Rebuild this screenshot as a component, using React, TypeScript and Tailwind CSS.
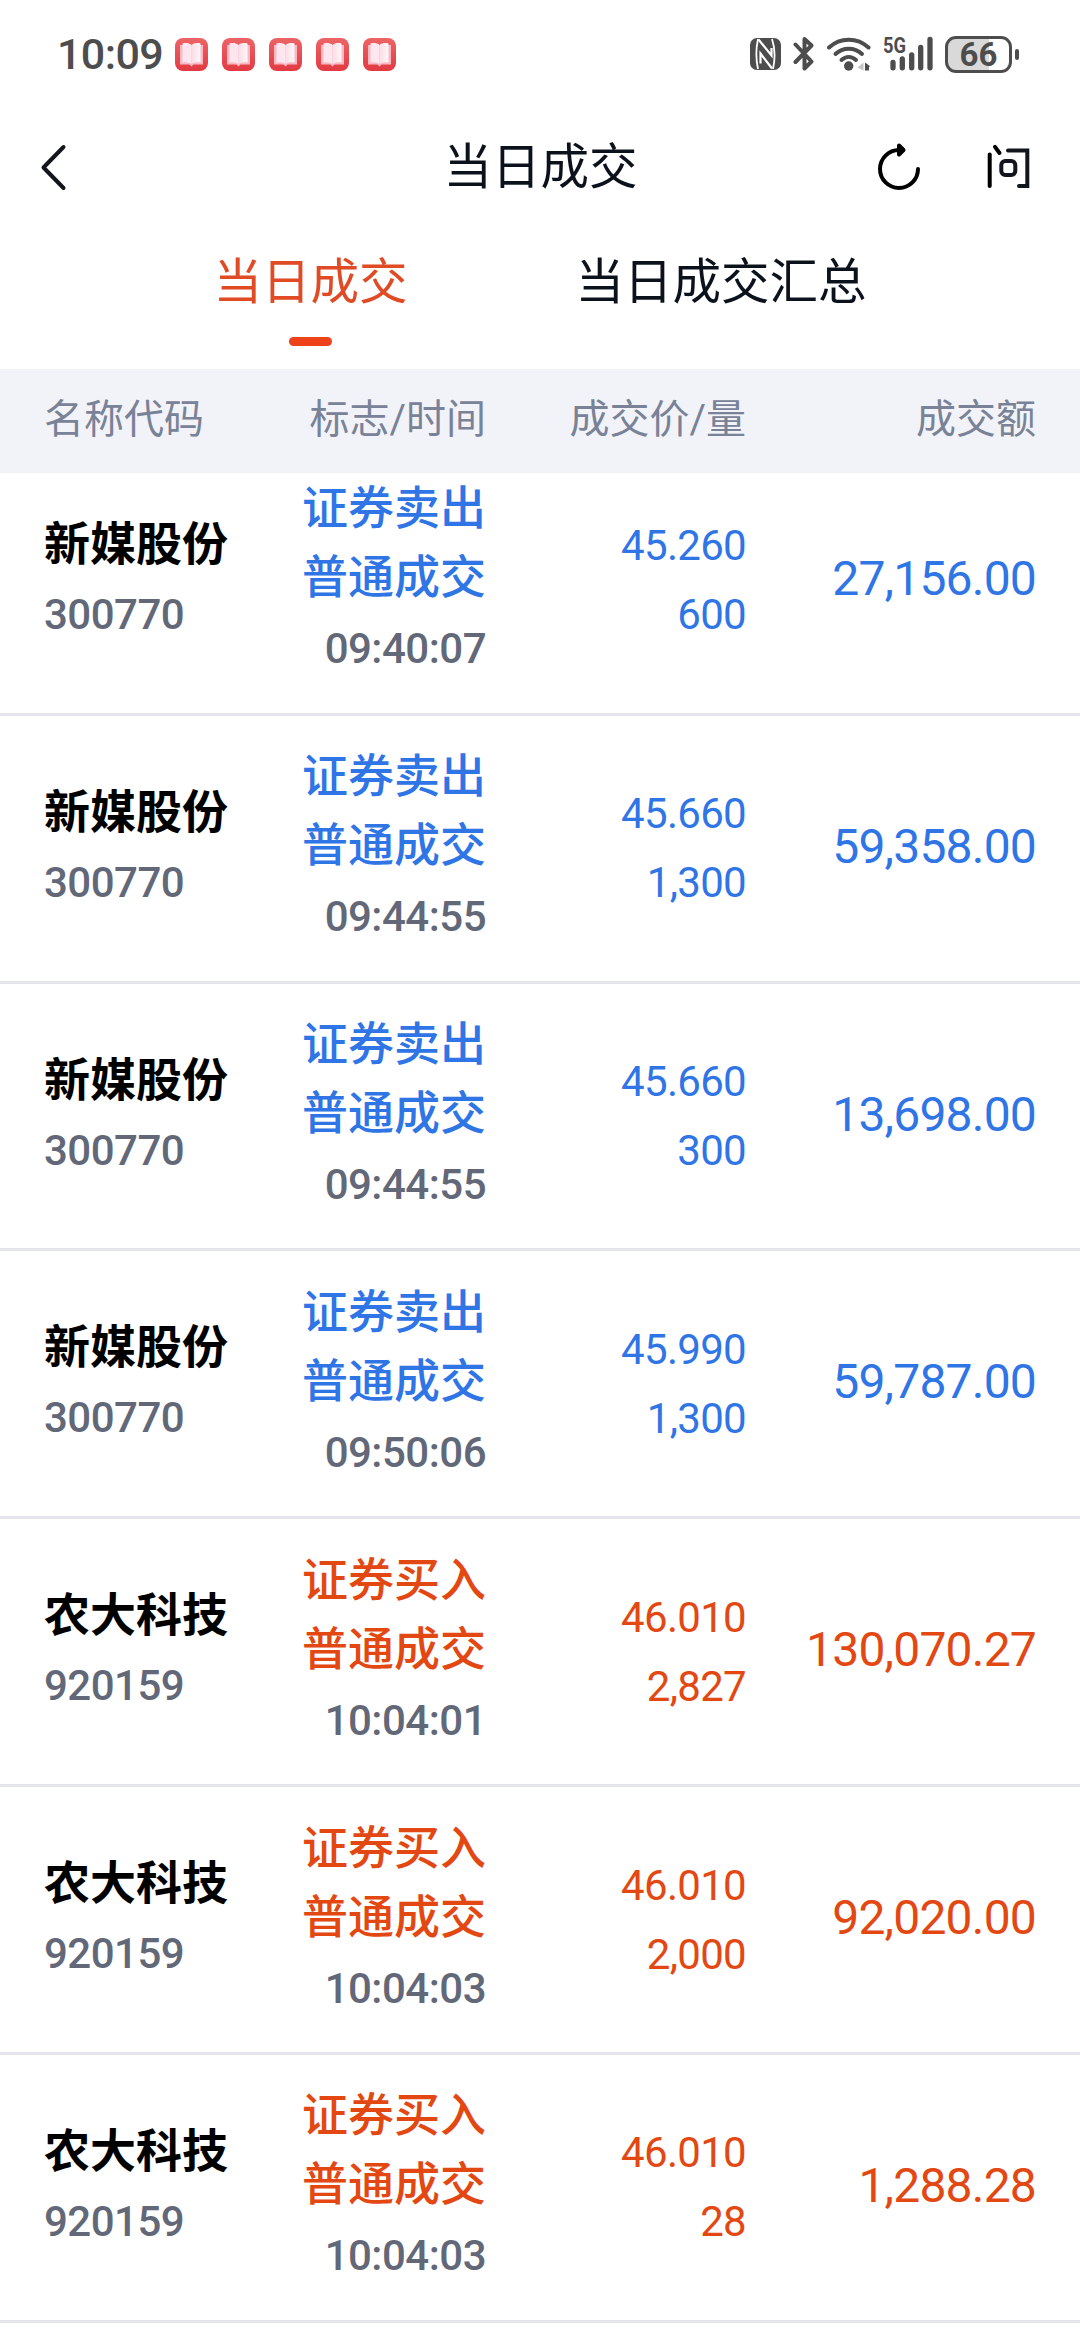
import clsx from "clsx";

type Deal = {
  name: string;
  code: string;
  side: "buy" | "sell";
  time: string;
  price: string;
  volume: string;
  amount: string;
};

const deals: Deal[] = [
  { name: "新媒股份", code: "300770", side: "sell", time: "09:40:07", price: "45.260", volume: "600", amount: "27,156.00" },
  { name: "新媒股份", code: "300770", side: "sell", time: "09:44:55", price: "45.660", volume: "1,300", amount: "59,358.00" },
  { name: "新媒股份", code: "300770", side: "sell", time: "09:44:55", price: "45.660", volume: "300", amount: "13,698.00" },
  { name: "新媒股份", code: "300770", side: "sell", time: "09:50:06", price: "45.990", volume: "1,300", amount: "59,787.00" },
  { name: "农大科技", code: "920159", side: "buy", time: "10:04:01", price: "46.010", volume: "2,827", amount: "130,070.27" },
  { name: "农大科技", code: "920159", side: "buy", time: "10:04:03", price: "46.010", volume: "2,000", amount: "92,020.00" },
  { name: "农大科技", code: "920159", side: "buy", time: "10:04:03", price: "46.010", volume: "28", amount: "1,288.28" },
];

const BookIcon = () => (
  <svg width="33" height="33" viewBox="0 0 33 33">
    <defs>
      <linearGradient id="book-bg" x1="0" y1="0" x2="0" y2="1">
        <stop offset="0" stopColor="#ec6466" />
        <stop offset="1" stopColor="#e23a42" />
      </linearGradient>
      <linearGradient id="book-page" x1="0" y1="0" x2="1" y2="0">
        <stop offset="0" stopColor="#fbdbe4" />
        <stop offset="1" stopColor="#fff7f9" />
      </linearGradient>
    </defs>
    <rect width="33" height="33" rx="8" fill="url(#book-bg)" />
    <path d="M5 7h23v19.5H18.500L16.500 28.500 14.500 26.500H5z" fill="#f9b9c4" />
    <path d="M7.500 5.500c3-1 7-.5 9 1.500v19c-2-1.500-6-2-9-1.500z" fill="#fde6ee" />
    <path d="M25.500 5.500c-3-1-7-.5-9 1.500v19c2-1.500 6-2 9-1.500z" fill="url(#book-page)" />
  </svg>
);

const NfcIcon = () => (
  <svg width="31" height="32" viewBox="0 0 31 32">
    <rect width="31" height="32" rx="7" fill="#4d4d4d" />
    <path d="M8 1C6 10 6 22 8 31M22 1C25 10 25 22 23 31" fill="none" stroke="#fff" strokeWidth="1.800" />
    <path d="M8.500 1.500 21.500 17.500V10M22 30.500 10.500 15.500v10" fill="none" stroke="#fff" strokeWidth="2.200" />
  </svg>
);

const BluetoothIcon = () => (
  <svg width="22" height="36" viewBox="0 0 22 36">
    <path
      d="M2.500 8.500 18.500 25.500 11.500 32.500V3L18.500 9.500 2.500 26"
      fill="none"
      stroke="#4d4d4d"
      strokeWidth="4"
      strokeLinecap="round"
      strokeLinejoin="round"
    />
  </svg>
);

const WifiIcon = () => (
  <svg width="44" height="36" viewBox="0 0 44 36">
    <g fill="none" stroke="#4d4d4d" strokeWidth="4" strokeLinecap="round">
      <path d="M2 11.500C13 1 30.500 1 41.500 11.500" />
      <path d="M8.500 18C16 11 27.500 11 35 18" />
      <path d="M14.500 24c4.500-4 10-4 14.500 0" />
    </g>
    <circle cx="21.700" cy="30" r="4.700" fill="#4d4d4d" />
    <path d="M36.500 26.500v8L30.500 31.500z" fill="#c4c4c4" />
    <path d="M38 26.500l5.500 4H42v4H38z" fill="#4d4d4d" />
  </svg>
);

const SignalIcon = () => (
  <div className="flex h-9 w-[50px] items-end">
    <svg width="50" height="42" viewBox="0 -6 50 42" className="shrink-0">
      <text x="0" y="17" textLength="23" lengthAdjust="spacingAndGlyphs" fontSize="22" fontWeight="700" fontFamily="Roboto, sans-serif" fill="#4d4d4d">
        5G
      </text>
      <path
        d="M10 26.500V31.800M19.300 23V31.800M28.700 19V31.800M37.700 11.500V31.800M47 3.500V31.800"
        stroke="#4d4d4d"
        strokeWidth="5.300"
        strokeLinecap="round"
      />
    </svg>
  </div>
);

const Battery = () => (
  <div className="flex items-center gap-[3px]">
    <div className="h-[37px] w-[67px] rounded-[11px] border-[3px] border-[#4d4d4d] bg-[linear-gradient(90deg,#d9d9d9_68%,#fff_68%)] text-center text-[33px] leading-[31px] font-bold text-[#4d4d4d]">
      66
    </div>
    <div className="h-[11px] w-1 rounded-full bg-[#4d4d4d]" />
  </div>
);

const StatusBar = () => (
  <div className="flex h-[108px] items-center pr-[61px] pl-[57px]">
    <span className="w-[118px] text-[43px] tracking-[-0.600px] text-[#4d4d4d] font-medium">10:09</span>
    <div className="flex gap-[14px]">
      {[0, 1, 2, 3, 4].map((i) => (
        <BookIcon key={i} />
      ))}
    </div>
    <div className="ml-auto flex items-center">
      <NfcIcon />
      <span className="ml-3">
        <BluetoothIcon />
      </span>
      <span className="ml-3">
        <WifiIcon />
      </span>
      <span className="mr-3 ml-3">
        <SignalIcon />
      </span>
      <Battery />
    </div>
  </div>
);

const NavBar = () => (
  <header className="flex h-[117px] items-center pr-[48px] pl-[38px]">
    <button className="w-[300px]">
      <svg width="30" height="50" viewBox="0 0 30 50" fill="none" stroke="#12161c" strokeWidth="4" strokeLinecap="round" strokeLinejoin="round">
        <path d="M25.500 5 5.500 25.500 25.500 46" />
      </svg>
    </button>
    <h1 className="flex-1 pt-0.5 pl-[11px] text-center text-[48.500px] leading-[60px] text-[#0c121c]">当日成交</h1>
    <div className="flex w-[300px] justify-end gap-[64px]">
      <button>
        <svg width="48" height="48" viewBox="0 0 48 48" fill="none" stroke="#000" strokeWidth="4" strokeLinecap="round">
          <path d="M44 26A19 19 0 1 1 25 7" />
          <path d="M25 2.500 29.500 7 25 11.500z" fill="#000" strokeLinejoin="round" />
        </svg>
      </button>
      <button aria-label="问">
        <svg width="46" height="48" viewBox="0 0 46 48" fill="none" stroke="#12161c" strokeWidth="4" strokeLinecap="round">
          <line x1="3.700" y1="11.500" x2="3.700" y2="43" stroke="#000" />
          <line x1="9" y1="3.800" x2="13.500" y2="10" stroke="#000" />
          <polyline points="22,7.500 41.300,7.500 41.300,43 33,43" />
          <rect x="15.300" y="18" width="14" height="14" rx="4" />
        </svg>
      </button>
    </div>
  </header>
);

const Tabs = () => (
  <nav className="flex h-[144px] justify-center gap-[168px] pt-[28px] text-[48.500px] leading-[60px]">
    <button className="flex flex-col items-center text-[#e04a24]">
      当日成交
      <span className="mt-[24px] h-[9px] w-[43px] rounded-full bg-[#ed421a]" />
    </button>
    <button className="flex flex-col items-center text-[#0c121c]">当日成交汇总</button>
  </nav>
);

const DealRow = ({ deal }: { deal: Deal }) => {
  const color = deal.side === "buy" ? "text-[#e34712]" : "text-[#2f75e6]";
  return (
    <li className="grid h-[267.830px] shrink-0 grid-cols-[200px_242px_260px_290px] items-center border-b-[3px] border-[#e3e5ea] px-[44px] leading-[69px]">
      <div className="-mt-0.5">
        <p className="text-[46px] font-bold text-black">{deal.name}</p>
        <p className="mt-px text-[42px] font-medium tracking-[-0.500px] text-[#626878]">{deal.code}</p>
      </div>
      <div className="-mt-0.5 text-right">
        <p className={clsx("-mt-px text-[46px] font-medium", color)}>证券{deal.side === "buy" ? "买入" : "卖出"}</p>
        <p className={clsx("text-[46px] font-medium", color)}>普通成交</p>
        <p className="mt-[2px] text-[42px] font-medium tracking-[-0.500px] text-[#626878]">{deal.time}</p>
      </div>
      <div className={clsx("text-right text-[42px] tracking-[-0.700px]", color)}>
        <p>{deal.price}</p>
        <p>{deal.volume}</p>
      </div>
      <p className={clsx("pb-1 text-right text-[48px] tracking-[-0.800px]", color)}>{deal.amount}</p>
    </li>
  );
};

export default function App() {
  return (
    <div className="flex h-[2340px] w-[1080px] flex-col overflow-hidden bg-white font-[Roboto,'Noto_Sans_CJK_SC',sans-serif]">
      <StatusBar />
      <NavBar />
      <Tabs />
      <div className="grid h-[104px] shrink-0 grid-cols-[200px_242px_260px_290px] items-center bg-[#f2f3f8] px-[44px] pb-0.5 text-[40px] text-[#798296]">
        <span>名称代码</span>
        <span className="text-right">标志/时间</span>
        <span className="text-right">成交价/量</span>
        <span className="text-right">成交额</span>
      </div>
      {/* list is scrolled by a few pixels, the first row sits partly under the header */}
      <div className="flex-1 overflow-hidden">
        <ul className="-mt-[25px] flex flex-col">
          {deals.map((deal, i) => (
            <DealRow key={i} deal={deal} />
          ))}
        </ul>
      </div>
    </div>
  );
}
